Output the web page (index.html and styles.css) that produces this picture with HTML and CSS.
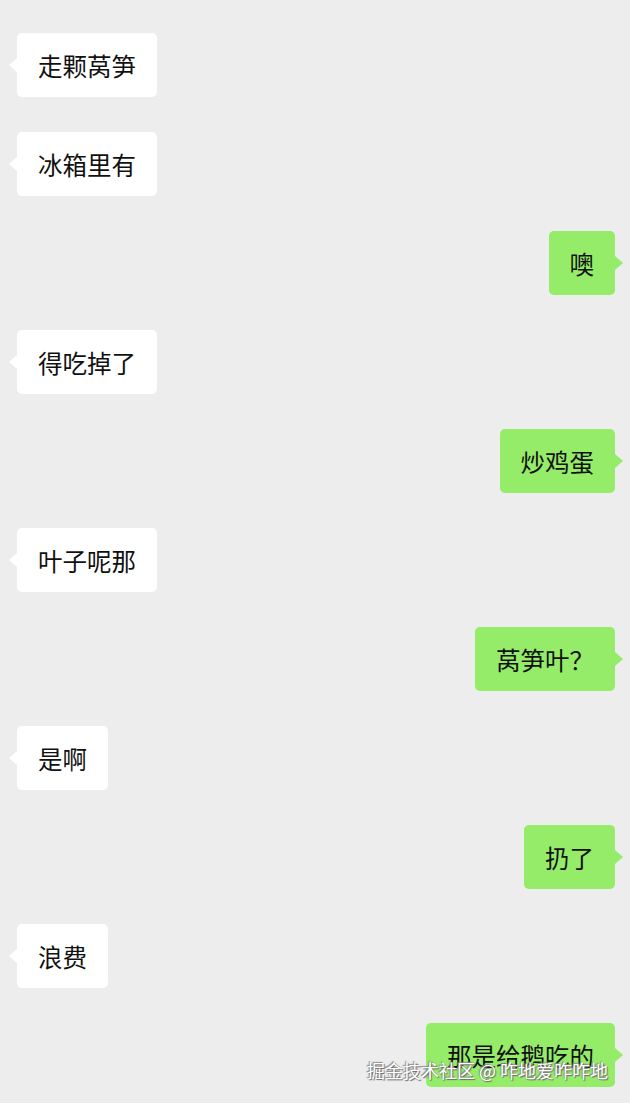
FILE: index.html
```html
<!DOCTYPE html>
<html lang="zh-CN">

<head>
    <meta charset="UTF-8">
    <meta name="viewport" content="width=device-width, initial-scale=1.0">
    <title>聊天记录</title>
    <link rel="stylesheet" href="styles.css">
</head>

<body>
    <!-- Chat -->
    <main class="chat">
        <div class="msg left"><div class="bubble">走颗莴笋</div></div>
        <div class="msg left"><div class="bubble">冰箱里有</div></div>
        <div class="msg right"><div class="bubble">噢</div></div>
        <div class="msg left"><div class="bubble">得吃掉了</div></div>
        <div class="msg right"><div class="bubble">炒鸡蛋</div></div>
        <div class="msg left"><div class="bubble">叶子呢那</div></div>
        <div class="msg right"><div class="bubble">莴笋叶？</div></div>
        <div class="msg left"><div class="bubble">是啊</div></div>
        <div class="msg right"><div class="bubble">扔了</div></div>
        <div class="msg left"><div class="bubble">浪费</div></div>
        <div class="msg right"><div class="bubble">那是给鹅吃的</div></div>
    </main>

    <!-- Watermark -->
    <div class="watermark">掘金技术社区 @ 咋地爱咋咋地</div>
</body>

</html>
```

FILE: styles.css
```css
/* WeChat style chat */
body {
    margin: 0;
    background: #ededed;
    font-family: "Noto Sans CJK SC", "Noto Sans", sans-serif;
    height: 1103px;
    overflow: hidden;
    position: relative;
}

.chat {
    display: flex;
    flex-direction: column;
    gap: 35px;
    padding: 33px 15px 0 17px;
}

.msg {
    display: flex;
}

.msg.right {
    justify-content: flex-end;
}

.bubble {
    position: relative;
    height: 64px;
    display: flex;
    align-items: center;
    padding: 0 21px;
    font-size: 24.5px;
    color: #111111;
    background: #ffffff;
    border-radius: 5px;
    white-space: nowrap;
}

.bubble::before {
    content: "";
    position: absolute;
    top: 50%;
    margin-top: -7px;
    border: 7px solid transparent;
}

.left .bubble::before {
    left: -14px;
    border-right: 8px solid #ffffff;
    border-left-width: 6px;
}

.right .bubble {
    background: #95ec69;
}

.right .bubble::before {
    right: -14px;
    border-left: 8px solid #95ec69;
    border-right-width: 6px;
}

/* Watermark */
.watermark {
    position: absolute;
    right: 22px;
    bottom: 20px;
    font-size: 18px;
    color: #ffffff;
    text-shadow: 1px 1px 1px #666, -1px -1px 1px #888;
}
```
